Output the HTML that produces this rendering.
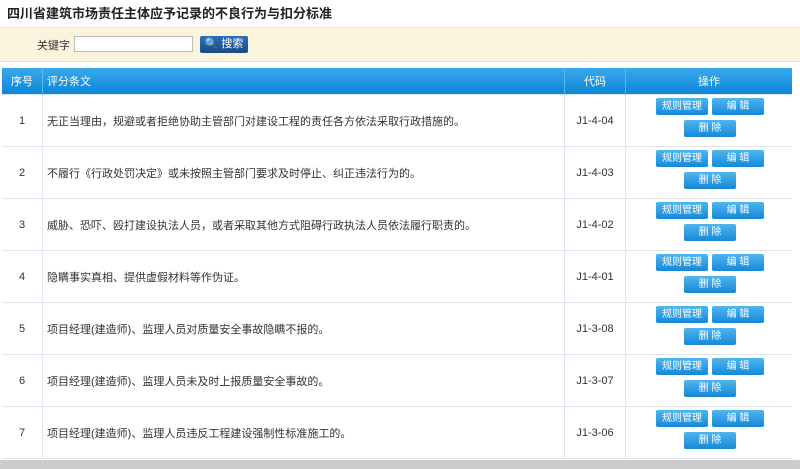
<!DOCTYPE html>
<html><head><meta charset="utf-8"><style>
body{margin:0;width:800px;height:469px;overflow:hidden;background:#fff;font-family:"Liberation Sans","Noto Sans CJK SC",sans-serif;font-size:11px;color:#333;position:relative}
.title{position:absolute;left:7px;top:3px;font-size:13px;font-weight:bold;color:#222}
.search{position:absolute;left:0;top:27px;width:800px;height:33px;background:#fcf3dc;border-top:1px solid #f1e3c0;border-bottom:1px solid #f1e3c0}
.search .lb{position:absolute;left:37px;top:9px;font-size:11px}
.search .in{position:absolute;left:74px;top:8px;width:117px;height:14px;border:1px solid #bbb;background:#fff}
.search .bt{position:absolute;left:200px;top:8px;width:48px;height:17px;background:linear-gradient(#2d6fb5,#164c8a);border-radius:2px;color:#fff;font-size:11px;line-height:17px;text-align:center}
table{position:absolute;left:2px;top:68px;width:790px;border-collapse:collapse}
th{height:24px;background:linear-gradient(#3aa9ec,#0c86d8);color:#fff;font-weight:normal;border-right:1px solid #5bb8ee;font-size:11px}
td{height:51px;border:1px solid #dde6ee;border-left:none;padding:0;font-size:11px}
td.c1{text-align:center;width:38px}
td.c2{padding-left:4px}
td.c3{text-align:center;width:60px}
td.c4{width:166px;text-align:center;border-right:none;vertical-align:top}
.bx{position:relative;height:51px}
.b{position:absolute;width:52px;height:17px;line-height:17px;background:linear-gradient(#4fb6f0,#1589d6);color:#fff;border-radius:2px;font-size:10px;text-align:center}
.x1{left:30px;top:3px}.x2{left:86px;top:3px}.x3{left:58px;top:25px}
.bottom{position:absolute;left:0;top:460px;width:800px;height:9px;background:#ccc}
</style></head><body>
<div class="title">四川省建筑市场责任主体应予记录的不良行为与扣分标准</div>
<div class="search"><span class="lb">关键字</span><div class="in"></div><div class="bt">🔍 搜索</div></div>
<table>
<tr><th style="width:38px">序号</th><th style="text-align:left;padding-left:4px">评分条文</th><th>代码</th><th style="border-right:none">操作</th></tr>
<tr><td class="c1">1</td><td class="c2">无正当理由，规避或者拒绝协助主管部门对建设工程的责任各方依法采取行政措施的。</td><td class="c3">J1-4-04</td><td class="c4"><div class="bx"><span class="b x1">规则管理</span><span class="b x2">编 辑</span><span class="b x3">删 除</span></div></td></tr>
<tr><td class="c1">2</td><td class="c2">不履行《行政处罚决定》或未按照主管部门要求及时停止、纠正违法行为的。</td><td class="c3">J1-4-03</td><td class="c4"><div class="bx"><span class="b x1">规则管理</span><span class="b x2">编 辑</span><span class="b x3">删 除</span></div></td></tr>
<tr><td class="c1">3</td><td class="c2">威胁、恐吓、殴打建设执法人员，或者采取其他方式阻碍行政执法人员依法履行职责的。</td><td class="c3">J1-4-02</td><td class="c4"><div class="bx"><span class="b x1">规则管理</span><span class="b x2">编 辑</span><span class="b x3">删 除</span></div></td></tr>
<tr><td class="c1">4</td><td class="c2">隐瞒事实真相、提供虚假材料等作伪证。</td><td class="c3">J1-4-01</td><td class="c4"><div class="bx"><span class="b x1">规则管理</span><span class="b x2">编 辑</span><span class="b x3">删 除</span></div></td></tr>
<tr><td class="c1">5</td><td class="c2">项目经理(建造师)、监理人员对质量安全事故隐瞒不报的。</td><td class="c3">J1-3-08</td><td class="c4"><div class="bx"><span class="b x1">规则管理</span><span class="b x2">编 辑</span><span class="b x3">删 除</span></div></td></tr>
<tr><td class="c1">6</td><td class="c2">项目经理(建造师)、监理人员未及时上报质量安全事故的。</td><td class="c3">J1-3-07</td><td class="c4"><div class="bx"><span class="b x1">规则管理</span><span class="b x2">编 辑</span><span class="b x3">删 除</span></div></td></tr>
<tr><td class="c1">7</td><td class="c2">项目经理(建造师)、监理人员违反工程建设强制性标准施工的。</td><td class="c3">J1-3-06</td><td class="c4"><div class="bx"><span class="b x1">规则管理</span><span class="b x2">编 辑</span><span class="b x3">删 除</span></div></td></tr>
</table>
<div class="bottom"></div>
</body></html>
